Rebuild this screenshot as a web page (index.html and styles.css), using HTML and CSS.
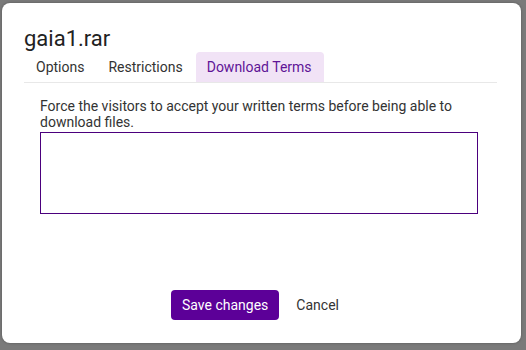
FILE: index.html
```html
<!DOCTYPE html>
<html>
<head>
    <meta charset="UTF-8">
    <meta name="viewport" content="width=device-width, initial-scale=1.0">
    <title>gaia1.rar</title>
    <link rel="stylesheet" href="styles.css">
</head>
<body>
    <div class="dialog">
        <div class="title">gaia1.rar</div>
        <div class="tabs">
            <div class="tab">Options</div>
            <div class="tab">Restrictions</div>
            <div class="tab active">Download Terms</div>
        </div>
        <div class="content">
            <p class="hint">Force the visitors to accept your written terms before being able to download files.</p>
            <textarea class="terms" autofocus></textarea>
        </div>
        <div class="actions">
            <button class="btn primary">Save changes</button>
            <button class="btn">Cancel</button>
        </div>
    </div>
</body>
</html>
```

FILE: styles.css
```css
html, body {
    height: 100%;
}
body {
    margin: 0;
    box-sizing: border-box;
    padding: 3px 5px 7px 2px;
    background: rgb(122, 122, 122);
    font-family: Roboto, "Liberation Sans", sans-serif;
    font-size: 14px;
    color: #333;
}
.dialog {
    height: 100%;
    box-sizing: border-box;
    display: flex;
    flex-direction: column;
    padding: 23px 24px 23px 22px;
    background: #fff;
    border-radius: 8px;
    box-shadow: 0 0 3px rgba(0, 0, 0, 0.3);
}
.title {
    font-size: 22px;
    line-height: 26px;
    color: #222;
}
.tabs {
    display: flex;
    border-bottom: 1px solid #e8e8e8;
}
.tab {
    height: 30px;
    display: flex;
    align-items: center;
    padding: 0 12px 0 12px;
    border-radius: 4px 4px 0 0;
    color: #333;
}
.tab.active {
    background: rgb(241, 227, 246);
    color: rgb(95, 20, 150);
    padding: 0 12px 0 11px;
    margin-left: 1px;
}
.content {
    flex: 1;
    padding: 15px 19px 0 16px;
}
.hint {
    margin: 0;
}
.terms {
    display: block;
    box-sizing: border-box;
    width: 100%;
    height: 82px;
    margin-top: 2px;
    padding: 3px 5px;
    border: 1px solid rgb(75, 0, 125);
    border-radius: 0;
    outline: none;
    resize: none;
    font-family: inherit;
    font-size: 14px;
    caret-color: #000;
}
.actions {
    display: flex;
    justify-content: center;
    gap: 5px;
    padding-left: 1px;
}
.btn {
    height: 30px;
    padding: 0 12px;
    border: 0;
    border-radius: 4px;
    background: none;
    font-family: inherit;
    font-size: 14px;
    color: #333;
}
.btn.primary {
    padding: 0 11px;
    background: rgb(92, 0, 152);
    color: #fff;
}
```
